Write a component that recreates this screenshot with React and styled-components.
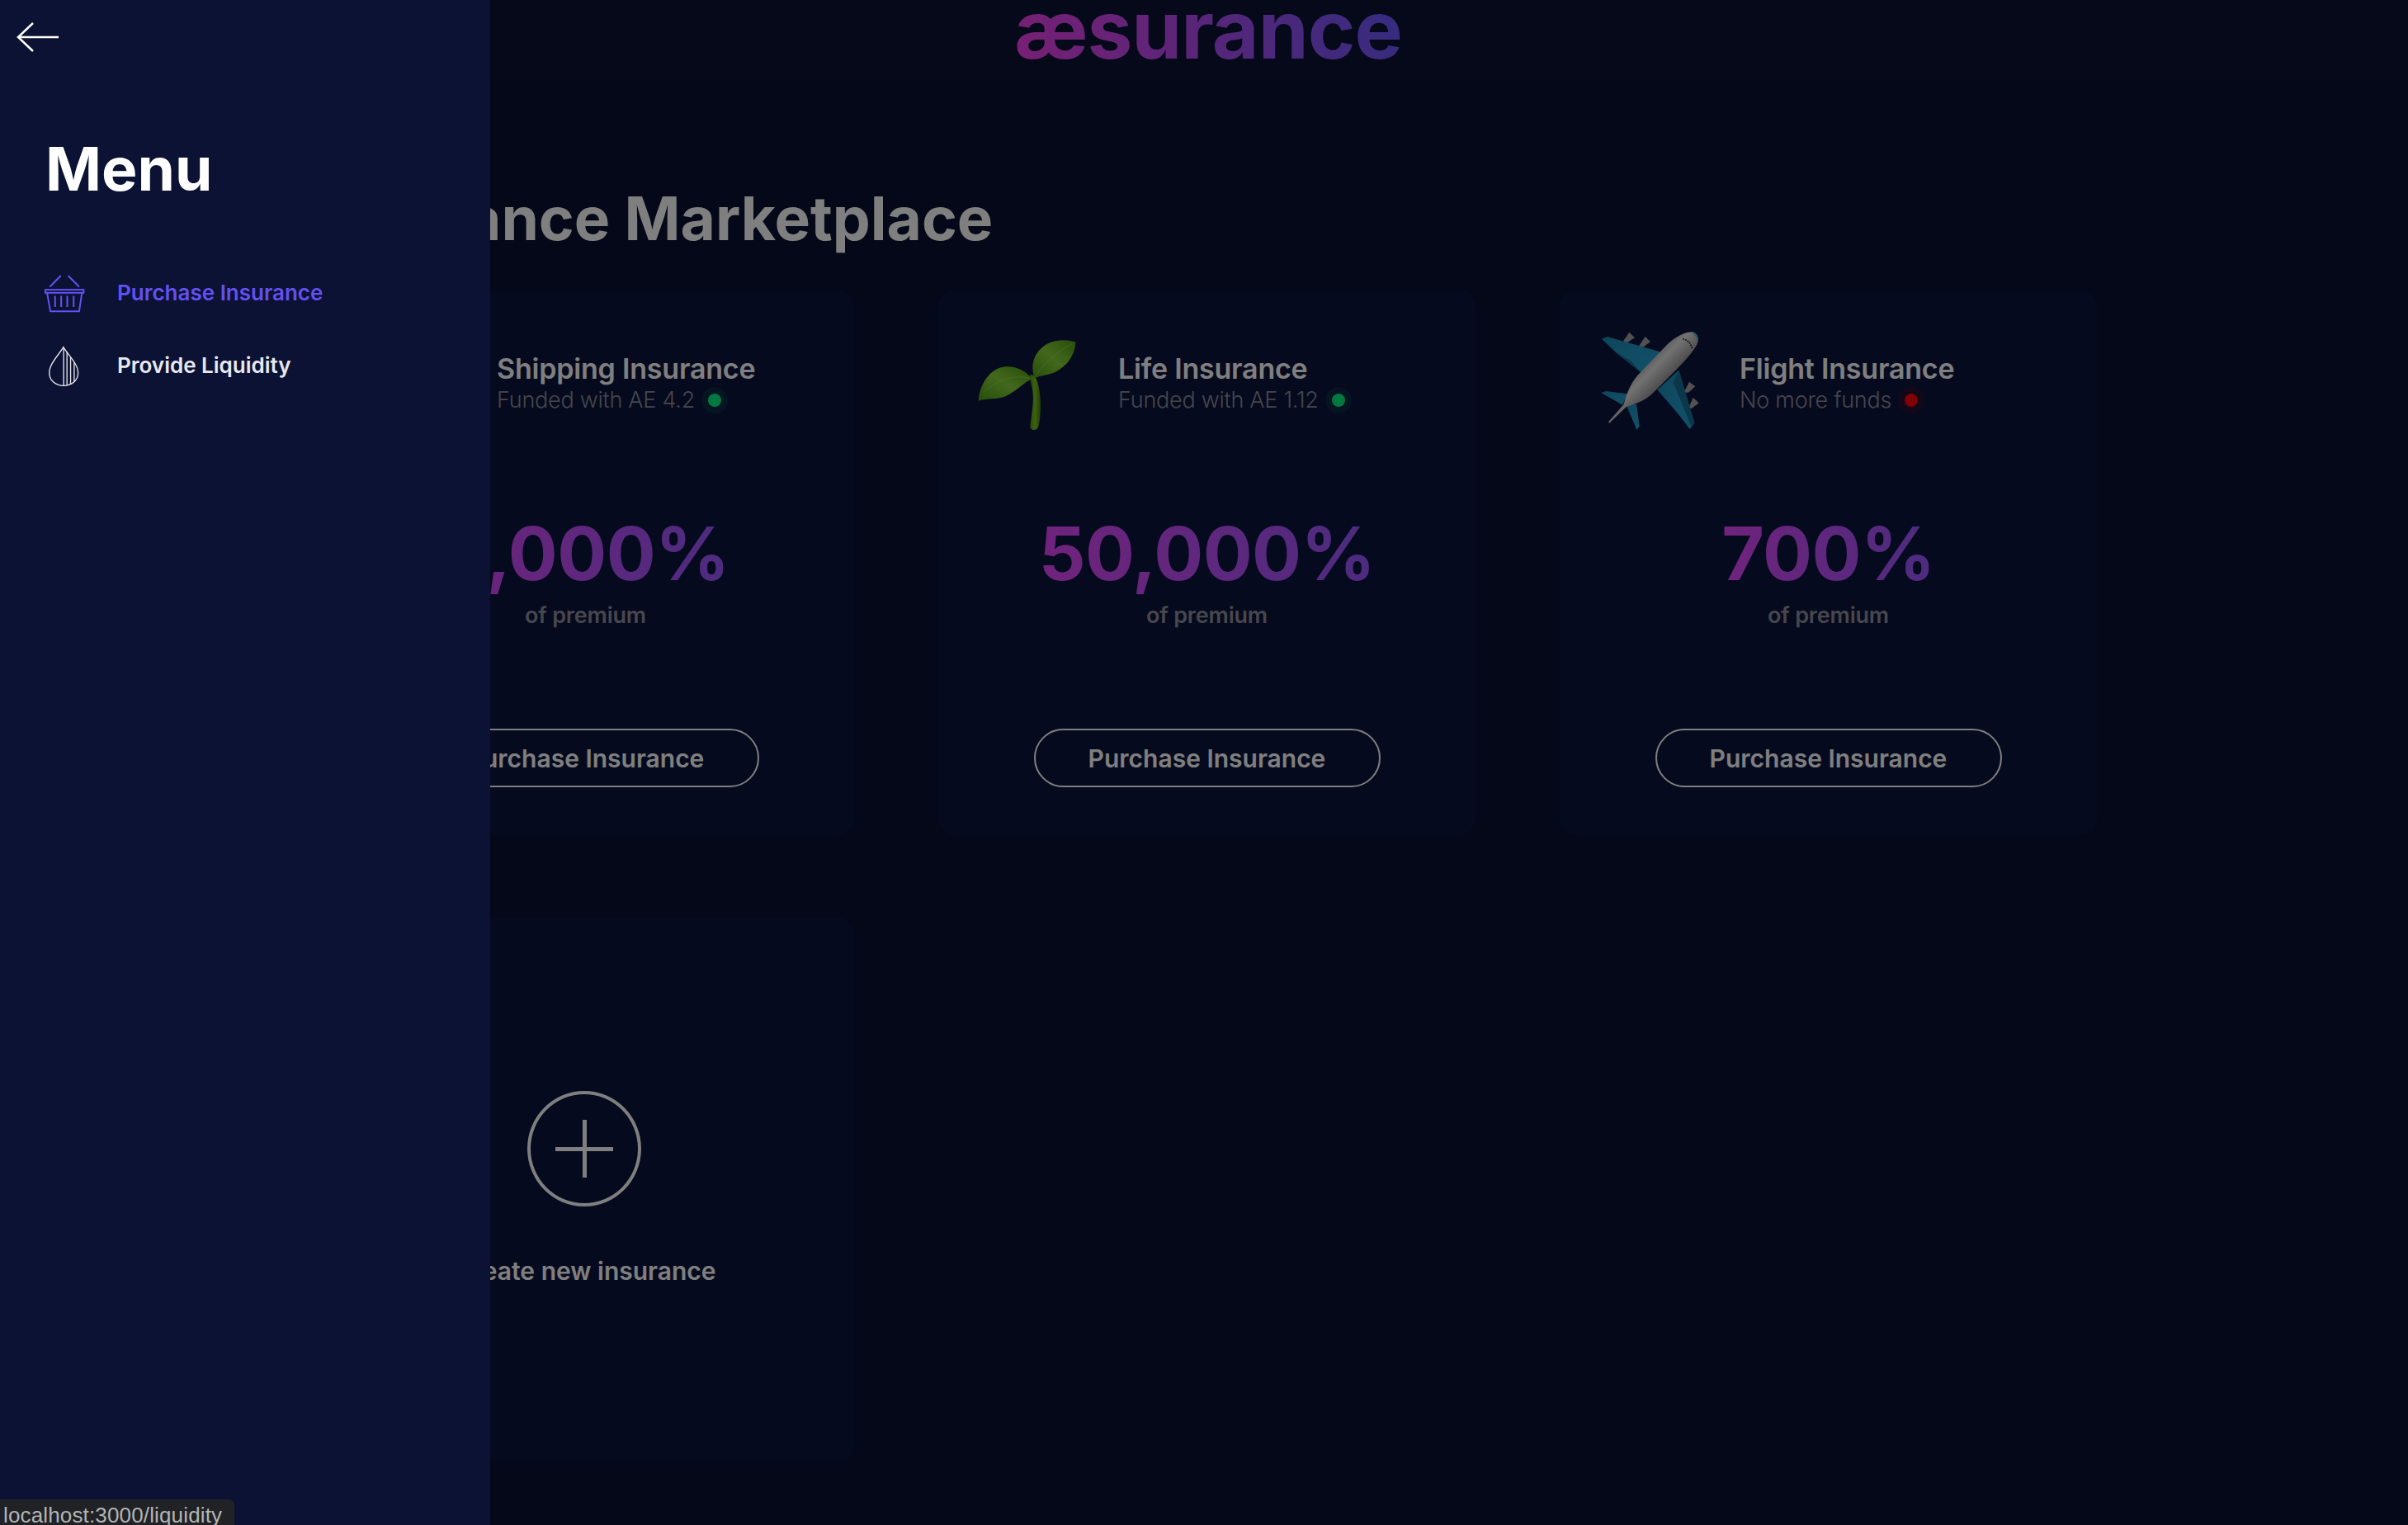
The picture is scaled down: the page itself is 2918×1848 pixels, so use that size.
import React from "react";
import styled, { createGlobalStyle } from "styled-components";

const fontStack = `Inter, "Open Sans", "Liberation Sans", sans-serif`;

const GlobalStyle = createGlobalStyle`
  html, body {
    margin: 0;
    height: 100%;
    background: #0a1132;
    font-family: ${fontStack};
    overflow: hidden;
  }
  * {
    box-sizing: border-box;
  }
`;

const Page = styled.div`
  width: 2918px;
  height: 1848px;
  display: flex;
  flex-direction: column;
  overflow: hidden;
  background: #0a1132;
`;

const Header = styled.header`
  height: 96px;
  flex: none;
  display: flex;
  justify-content: center;
  align-items: flex-start;
  background: #0b1232;
`;

const Logo = styled.div`
  font-size: 98px;
  font-weight: 700;
  line-height: 71px;
  letter-spacing: -1px;
  margin: 0 0 0 10px;
  padding-bottom: 8px;
  background: linear-gradient(80deg, #f040e8 0%, #6a58ff 100%);
  -webkit-background-clip: text;
  background-clip: text;
  color: transparent;
`;

const Main = styled.main`
  padding: 124px 0 0 384px;
`;

const Title = styled.h1`
  margin: 0;
  font-size: 73px;
  font-weight: 700;
  line-height: 90px;
  color: #fff;
`;

const Grid = styled.div`
  display: grid;
  grid-template-columns: repeat(3, 651px);
  grid-auto-rows: 661px;
  column-gap: 102px;
  row-gap: 100px;
  margin-top: 41px;
`;

const Card = styled.section`
  display: flex;
  flex-direction: column;
  align-items: center;
  padding-top: 29px;
  border-radius: 20px;
  background: #0c143c;
`;

const CardHead = styled.div`
  align-self: stretch;
  display: flex;
  align-items: center;
  height: 160px;
  padding-left: 31px;
  gap: 7px;
`;

const IconBox = styled.div`
  width: 180px;
  height: 160px;
  flex: none;
`;

const CardText = styled.div`
  padding-top: 10px;
`;

const CardName = styled.div`
  font-size: 34px;
  font-weight: 600;
  line-height: 40px;
  letter-spacing: -0.2px;
  color: #fff;
`;

const FundLine = styled.div`
  display: flex;
  align-items: center;
  font-size: 27px;
  font-weight: 300;
  line-height: 36px;
  letter-spacing: -0.25px;
  color: #8c8c98;
`;

const Dot = styled.span`
  width: 16px;
  height: 16px;
  margin-left: 16px;
  border-radius: 50%;
  background: ${(p) => (p.$ok ? "#00f080" : "#ff0000")};
  box-shadow: 0 0 0 8px ${(p) => (p.$ok ? "rgba(0, 240, 128, 0.1)" : "rgba(255, 0, 0, 0.1)")};
`;

const Percent = styled.div`
  margin-top: 76px;
  font-size: 89px;
  font-weight: 700;
  line-height: 110px;
  letter-spacing: -0.6px;
  background: linear-gradient(90deg, #e046f8 0%, #9858ff 100%);
  -webkit-background-clip: text;
  background-clip: text;
  color: transparent;
`;

const PremiumNote = styled.div`
  margin-top: 3px;
  font-size: 27px;
  font-weight: 600;
  line-height: 34px;
  letter-spacing: -0.2px;
  color: #8e8e9a;
`;

const BuyButton = styled.button`
  width: 420px;
  height: 71px;
  margin-top: 120px;
  border: 2px solid #fff;
  border-radius: 36px;
  background: transparent;
  font-family: ${fontStack};
  font-size: 30px;
  font-weight: 600;
  color: #fff;
`;

const CreateCard = styled(Card)`
  justify-content: flex-start;
  padding-top: 210px;
`;

const PlusCircle = styled.div`
  position: relative;
  width: 138px;
  height: 140px;
  margin-right: 3px;
  border: 4px solid #fff;
  border-radius: 50%;

  &::before,
  &::after {
    content: "";
    position: absolute;
    background: #fff;
  }
  &::before {
    left: 30px;
    right: 30px;
    top: 64px;
    height: 5px;
  }
  &::after {
    top: 31px;
    bottom: 31px;
    left: 63px;
    width: 5px;
  }
`;

const CreateLabel = styled.div`
  margin-top: 58px;
  font-size: 30px;
  font-weight: 600;
  line-height: 40px;
  color: #fff;
`;

const Dimmer = styled.div`
  position: fixed;
  inset: 0;
  background: rgba(0, 0, 0, 0.5);
`;

const Drawer = styled.aside`
  position: fixed;
  top: 0;
  left: 0;
  bottom: 0;
  width: 594px;
  padding-top: 26px;
  background: #0b1233;
`;

const BackButton = styled.div`
  height: 38px;
  padding-left: 20px;
`;

const DrawerBody = styled.div`
  padding-left: 50px;
`;

const MenuTitle = styled.h2`
  margin: 96px 0 0 5px;
  font-size: 73px;
  font-weight: 700;
  line-height: 90px;
  color: #fff;
`;

const NavList = styled.nav`
  display: flex;
  flex-direction: column;
  gap: 36px;
  margin-top: 80px;
`;

const NavItem = styled.a`
  display: flex;
  align-items: center;
  gap: 35px;
  height: 52px;
  font-size: 26px;
  font-weight: 600;
  color: ${(p) => (p.$active ? "#6450f0" : "#e8e8ee")};
`;

const NavLabel = styled.span`
  margin-bottom: 3px;
`;

const StatusBubble = styled.div`
  position: fixed;
  left: 0;
  bottom: 0;
  width: 284px;
  height: 31px;
  padding: 5px 0 0 4px;
  border-top-right-radius: 6px;
  background: #202226;
  font-family: "Liberation Sans", sans-serif;
  font-size: 26px;
  line-height: 28px;
  letter-spacing: 0.15px;
  color: #b4b4b4;
  white-space: nowrap;
  overflow: hidden;
`;

const Seedling = () => (
  <svg width="180" height="160" viewBox="-3 -30 540 480">
    <defs>
      <linearGradient id="leafA" x1="0" y1="1" x2="1" y2="0">
        <stop offset="0" stopColor="#4f9a12" />
        <stop offset="0.5" stopColor="#86d03a" />
        <stop offset="1" stopColor="#4f9a12" />
      </linearGradient>
      <linearGradient id="stem" x1="0" y1="0" x2="1" y2="0">
        <stop offset="0" stopColor="#4a9410" />
        <stop offset="0.5" stopColor="#7cc420" />
        <stop offset="1" stopColor="#427f10" />
      </linearGradient>
    </defs>
    <path d="M236 194 C254 188 264 210 270 240 C280 290 276 350 268 382 C262 398 238 396 238 380 C242 340 254 290 246 245 C243 225 238 212 236 194Z" fill="url(#stem)" />
    <path d="M50 287 C54 236 80 186 125 168 C168 154 218 170 244 208 C214 222 188 252 150 270 C115 284 85 276 50 287Z" fill="url(#leafA)" />
    <path d="M404 73 C400 122 374 160 330 182 C300 196 272 192 255 207 C241 175 245 128 275 100 C310 62 360 62 404 73Z" fill="url(#leafA)" />
    <path d="M70 258 C110 215 170 190 235 205 M262 190 C290 150 335 110 390 80" stroke="#b4e080" strokeWidth="2.5" fill="none" opacity="0.6" />
  </svg>
);

const Plane = () => (
  <svg width="180" height="160" viewBox="0 0 540 480">
    <defs>
      <linearGradient id="hull" x1="0.15" y1="0.15" x2="0.75" y2="0.75">
        <stop offset="0.2" stopColor="#787878" />
        <stop offset="0.5" stopColor="#e4e4e4" />
        <stop offset="0.85" stopColor="#707070" />
      </linearGradient>
      <linearGradient id="wing" x1="0" y1="0" x2="1" y2="1">
        <stop offset="0" stopColor="#1a8cb8" />
        <stop offset="1" stopColor="#26a4d4" />
      </linearGradient>
    </defs>
    <g fill="#a0a0a0">
      <path d="M138 100 L160 68 L180 88 L150 107Z" />
      <path d="M195 118 L218 83 L237 103 L208 124Z" />
      <path d="M358 287 L378 248 L400 265 L375 287Z" />
      <path d="M375 344 L392 305 L413 325 L388 344Z" />
    </g>
    <path d="M60 92 L80 84 L277 140 L205 216 L112 142Z" fill="url(#wing)" />
    <path d="M110 140 L165 170 L205 216 L112 142Z" fill="#176f96" />
    <path d="M340 205 L397 398 L380 420 L338 365 L262 277Z" fill="url(#wing)" />
    <path d="M340 205 L397 398 L385 410 L320 250Z" fill="#176f96" />
    <path d="M58 288 L75 282 L152 292 L136 332Z" fill="url(#wing)" />
    <path d="M150 335 L186 328 L197 410 L187 422Z" fill="url(#wing)" />
    <path d="M84 394 L140 330 C150 290 165 255 190 225 L300 110 C330 85 365 62 395 68 C412 75 415 95 405 115 C385 150 345 190 310 225 L240 295 C210 320 180 330 150 338 L88 398Z" fill="url(#hull)" />
    <path d="M385 68 C400 70 414 82 410 100 C406 85 396 74 385 68Z" fill="#2ab0e0" />
    <path d="M355 92 C370 95 385 108 388 126" stroke="#303030" strokeWidth="6" strokeDasharray="5 4" fill="none" />
  </svg>
);

const Basket = () => (
  <svg width="57" height="52" viewBox="60 60 170 155" fill="none" stroke="#6450f0" strokeWidth="6">
    <path d="M91 112 L131 72 M157 72 L197 112" />
    <rect x="75" y="123" width="138" height="11" />
    <path d="M81 134 L93 201 H197 L207 134" />
    <path d="M110 145 V185 M132 145 V185 M154 145 V185 M177 145 V185" />
  </svg>
);

const Drop = () => (
  <svg width="57" height="52" viewBox="60 324 170 155" fill="none" stroke="#e8e8ee" strokeWidth="4">
    <path d="M140 332 C122 362 89 392 89 425 C89 452 112 471 141 471 C170 471 193 452 193 425 C193 392 158 362 140 332Z" />
    <path d="M141 332 V471 M153 350 V470 M166 368 V466 M179 388 V458" />
  </svg>
);

const BackArrow = () => (
  <svg width="52" height="38" viewBox="0 0 52 38" fill="none" stroke="#fff" strokeWidth="2.5">
    <path d="M20 2 L2 19 L20 36 M2 19 H51" />
  </svg>
);

const policies = [
  { name: "Shipping Insurance", fund: "Funded with AE 4.2", ok: true, rate: "5,000%", icon: null },
  { name: "Life Insurance", fund: "Funded with AE 1.12", ok: true, rate: "50,000%", icon: <Seedling /> },
  { name: "Flight Insurance", fund: "No more funds", ok: false, rate: "700%", icon: <Plane /> },
];

const App = () => (
  <>
    <GlobalStyle />
    <Page>
      <Header>
        <Logo>æsurance</Logo>
      </Header>
      <Main>
        <Title>Insurance Marketplace</Title>
        <Grid>
          {policies.map((policy) => (
            <Card key={policy.name}>
              <CardHead>
                <IconBox>{policy.icon}</IconBox>
                <CardText>
                  <CardName>{policy.name}</CardName>
                  <FundLine>
                    {policy.fund}
                    <Dot $ok={policy.ok} />
                  </FundLine>
                </CardText>
              </CardHead>
              <Percent>{policy.rate}</Percent>
              <PremiumNote>of premium</PremiumNote>
              <BuyButton>Purchase Insurance</BuyButton>
            </Card>
          ))}
          <CreateCard>
            <PlusCircle />
            <CreateLabel>Create new insurance</CreateLabel>
          </CreateCard>
        </Grid>
      </Main>
    </Page>
    <Dimmer />
    <Drawer>
      <BackButton>
        <BackArrow />
      </BackButton>
      <DrawerBody>
        <MenuTitle>Menu</MenuTitle>
        <NavList>
          <NavItem $active>
            <Basket />
            <NavLabel>Purchase Insurance</NavLabel>
          </NavItem>
          <NavItem>
            <Drop />
            <NavLabel>Provide Liquidity</NavLabel>
          </NavItem>
        </NavList>
      </DrawerBody>
    </Drawer>
    <StatusBubble>localhost:3000/liquidity</StatusBubble>
  </>
);

export default App;
